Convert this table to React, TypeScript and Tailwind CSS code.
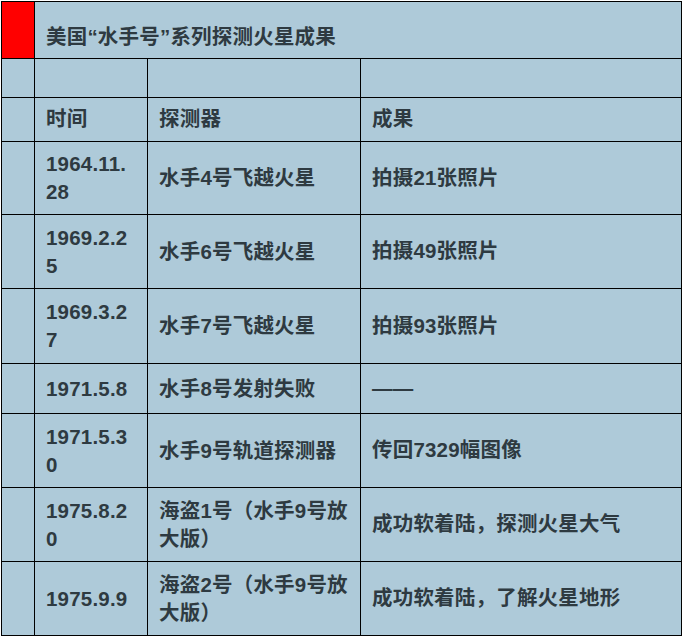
const rows: { date: string[]; probe: string[]; result: string; h: string }[] = [
  { date: ['1964.11.', '28'], probe: ['水手4号飞越火星'], result: '拍摄21张照片', h: 'h-[72px]' },
  { date: ['1969.2.2', '5'], probe: ['水手6号飞越火星'], result: '拍摄49张照片', h: 'h-[73px]' },
  { date: ['1969.3.2', '7'], probe: ['水手7号飞越火星'], result: '拍摄93张照片', h: 'h-[74px]' },
  { date: ['1971.5.8'], probe: ['水手8号发射失败'], result: '——', h: 'h-[49px]' },
  { date: ['1971.5.3', '0'], probe: ['水手9号轨道探测器'], result: '传回7329幅图像', h: 'h-[73px]' },
  { date: ['1975.8.2', '0'], probe: ['海盗1号（水手9号放', '大版）'], result: '成功软着陆，探测火星大气', h: 'h-[73px]' },
  { date: ['1975.9.9'], probe: ['海盗2号（水手9号放', '大版）'], result: '成功软着陆，了解火星地形', h: 'h-[73px]' },
]

const cell = 'flex items-center bg-[#aecad9] pl-[11px]'

function Lines({ lines }: { lines: string[] }) {
  return (
    <div className="leading-[28px]">
      {lines.map((l, i) => (
        <div key={i}>{l}</div>
      ))}
    </div>
  )
}

export default function App() {
  return (
    <div className="min-h-screen bg-white">
      <div
        className="ml-[1px] mt-[1px] grid w-[681px] grid-cols-[32px_112px_212px_320px] gap-px border border-black bg-black text-[20.5px] font-bold tracking-[0.2px] text-[#2e3a41]"
        style={{ fontFamily: '"Liberation Sans", "Noto Sans CJK SC", sans-serif' }}
      >
        <div className="h-[56px] bg-[#ff0000]" />
        <div className="col-span-3 flex h-[56px] items-center bg-[#aecad9] pl-[11px] pt-[14px]">
          美国“水手号”系列探测火星成果
        </div>

        <div className="h-[38px] bg-[#aecad9]" />
        <div className="bg-[#aecad9]" />
        <div className="bg-[#aecad9]" />
        <div className="bg-[#aecad9]" />

        <div className="h-[43px] bg-[#aecad9]" />
        <div className={cell}>时间</div>
        <div className={cell}>探测器</div>
        <div className={cell}>成果</div>

        {rows.map((r) => (
          <div key={r.date.join('')} className="contents">
            <div className={`${r.h} bg-[#aecad9]`} />
            <div className={cell}>
              <Lines lines={r.date} />
            </div>
            <div className={cell}>
              <Lines lines={r.probe} />
            </div>
            <div className={cell}>{r.result}</div>
          </div>
        ))}
      </div>
    </div>
  )
}
